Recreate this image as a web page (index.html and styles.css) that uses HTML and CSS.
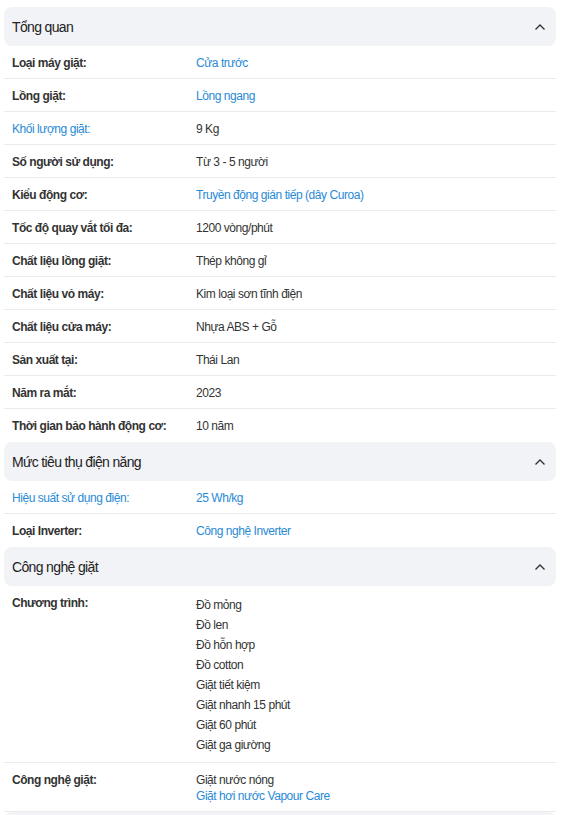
FILE: index.html
```html
<!DOCTYPE html>
<html lang="vi">
<head>
    <meta charset="UTF-8">
    <meta name="viewport" content="width=device-width, initial-scale=1.0">
    <title>Thông số kỹ thuật</title>
    <link rel="stylesheet" href="styles.css">
</head>
<body>
    <div class="specs">
        <div class="group">
            <div class="group-head">
                <span>Tổng quan</span>
                <svg class="chevron" width="12" height="8" viewBox="0 0 12 8"><polyline points="1.5,6.5 6,2 10.5,6.5" fill="none" stroke="#333" stroke-width="1.4"/></svg>
            </div>
            <ul class="rows">
                <li><span class="label">Loại máy giặt:</span><span class="value link">Cửa trước</span></li>
                <li><span class="label">Lồng giặt:</span><span class="value link">Lồng ngang</span></li>
                <li><span class="label link">Khối lượng giặt:</span><span class="value">9 Kg</span></li>
                <li><span class="label">Số người sử dụng:</span><span class="value">Từ 3 - 5 người</span></li>
                <li><span class="label">Kiểu động cơ:</span><span class="value link">Truyền động gián tiếp (dây Curoa)</span></li>
                <li><span class="label">Tốc độ quay vắt tối đa:</span><span class="value">1200 vòng/phút</span></li>
                <li><span class="label">Chất liệu lồng giặt:</span><span class="value">Thép không gỉ</span></li>
                <li><span class="label">Chất liệu vỏ máy:</span><span class="value">Kim loại sơn tĩnh điện</span></li>
                <li><span class="label">Chất liệu cửa máy:</span><span class="value">Nhựa ABS + Gỗ</span></li>
                <li><span class="label">Sản xuất tại:</span><span class="value">Thái Lan</span></li>
                <li><span class="label">Năm ra mắt:</span><span class="value">2023</span></li>
                <li><span class="label">Thời gian bảo hành động cơ:</span><span class="value">10 năm</span></li>
            </ul>
        </div>

        <div class="group">
            <div class="group-head">
                <span>Mức tiêu thụ điện năng</span>
                <svg class="chevron" width="12" height="8" viewBox="0 0 12 8"><polyline points="1.5,6.5 6,2 10.5,6.5" fill="none" stroke="#333" stroke-width="1.4"/></svg>
            </div>
            <ul class="rows">
                <li><span class="label link">Hiệu suất sử dụng điện:</span><span class="value link">25 Wh/kg</span></li>
                <li><span class="label">Loại Inverter:</span><span class="value link">Công nghệ Inverter</span></li>
            </ul>
        </div>

        <div class="group">
            <div class="group-head">
                <span>Công nghệ giặt</span>
                <svg class="chevron" width="12" height="8" viewBox="0 0 12 8"><polyline points="1.5,6.5 6,2 10.5,6.5" fill="none" stroke="#333" stroke-width="1.4"/></svg>
            </div>
            <ul class="rows">
                <li>
                    <span class="label">Chương trình:</span>
                    <div class="value list">
                        <span>Đồ mỏng</span>
                        <span>Đồ len</span>
                        <span>Đồ hỗn hợp</span>
                        <span>Đồ cotton</span>
                        <span>Giặt tiết kiệm</span>
                        <span>Giặt nhanh 15 phút</span>
                        <span>Giặt 60 phút</span>
                        <span>Giặt ga giường</span>
                    </div>
                </li>
                <li class="keep-line">
                    <span class="label">Công nghệ giặt:</span>
                    <div class="value stack">
                        <span>Giặt nước nóng</span>
                        <span class="link">Giặt hơi nước Vapour Care</span>
                    </div>
                </li>
            </ul>
        </div>
        <div class="group-head stub"></div>
    </div>
</body>
</html>
```

FILE: styles.css
```css
body {
    margin: 0;
    font-family: "Liberation Sans", Arial, sans-serif;
    color: #333;
    background: #fff;
}
.specs {
    padding: 7px 8px 0 4px;
}
.group-head {
    display: flex;
    align-items: center;
    justify-content: space-between;
    height: 39px;
    padding: 0 10px 0 8px;
    background: #f2f3f7;
    border-radius: 8px;
    font-size: 14px;
    letter-spacing: -0.65px;
    color: #222;
}
.group-head.stub {
    height: 10px;
    border-radius: 8px 8px 0 0;
}
.chevron {
    display: block;
}
.rows {
    list-style: none;
    margin: 0;
    padding: 0;
}
.rows li {
    display: flex;
    padding: 9px 8px 7px;
    border-bottom: 1px solid #ebebeb;
    font-size: 12px;
    line-height: 16px;
    letter-spacing: -0.45px;
}
.rows li:last-child {
    border-bottom-color: transparent;
}
.rows li.keep-line {
    border-bottom-color: #ebebeb;
}
.label {
    flex: 0 0 184px;
    font-weight: bold;
}
.label.link {
    font-weight: normal;
}
.value {
    flex: 1;
}
.link {
    color: #288ad6;
}
.list, .stack {
    display: flex;
    flex-direction: column;
}
.list span {
    line-height: 20px;
}
```
